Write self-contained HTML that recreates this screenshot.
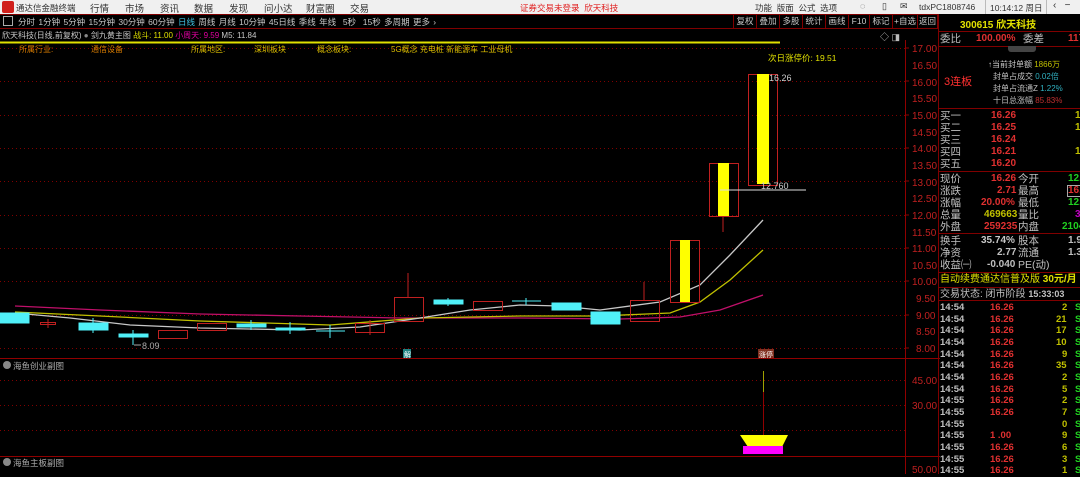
<!DOCTYPE html>
<html><head><meta charset="utf-8"><style>
*{margin:0;padding:0;box-sizing:border-box}
body{width:1080px;height:474px;background:#000;overflow:hidden;position:relative;font-family:"Liberation Sans","Noto Sans CJK SC",sans-serif;font-size:9px;color:#c0c0c0}
.a{position:absolute;white-space:nowrap}
#top{left:0;top:0;width:1080px;height:14px;background:#f0f0f0;color:#333;font-size:9px}
#per{left:0;top:14px;width:938px;height:15px;border-top:1px solid #800000;border-bottom:1px solid #800000;font-size:8.5px;color:#c8c8c8}
.btn{position:absolute;top:15px;height:14px;border-left:1px solid #800000;font-size:8.5px;color:#c8c8c8;text-align:center;line-height:13px}
.rp{left:938px;width:142px;border-left:1px solid #800000}
.row{position:absolute;left:940px;width:140px;height:12px;font-size:10.5px;line-height:12px}
.row b{font-size:10px}
.tk{position:absolute;left:940px;width:140px;height:11.7px;font-size:9.5px;font-weight:bold;line-height:11px}
</style></head><body>
<div class="a" id="top">
 <div class="a" style="left:2px;top:1px;width:12px;height:12px;background:#d0201c;border-radius:2px"></div>
 <span class="a" style="left:16px;top:2px;font-size:8.5px">通达信金融终端</span>
 <span class="a" style="left:90px;top:1px;font-size:9.5px">行情</span>
 <span class="a" style="left:125px;top:1px;font-size:9.5px">市场</span>
 <span class="a" style="left:160px;top:1px;font-size:9.5px">资讯</span>
 <span class="a" style="left:194px;top:1px;font-size:9.5px">数据</span>
 <span class="a" style="left:229px;top:1px;font-size:9.5px">发现</span>
 <span class="a" style="left:264px;top:1px;font-size:9.5px">问小达</span>
 <span class="a" style="left:306px;top:1px;font-size:9.5px">财富圈</span>
 <span class="a" style="left:350px;top:1px;font-size:9.5px">交易</span>
 <span class="a" style="left:520px;top:2px;color:#e02020;font-size:8.5px">证券交易未登录&nbsp; 欣天科技</span>
 <span class="a" style="left:755px;top:2px;font-size:8.5px">功能&nbsp; 版面&nbsp; 公式&nbsp; 选项</span>
 <span class="a" style="left:860px;top:1px">◌</span>
 <span class="a" style="left:882px;top:1px">▯</span>
 <span class="a" style="left:900px;top:1px">✉</span>
 <span class="a" style="left:919px;top:2px;font-size:8.5px">tdxPC1808746</span>
 <div class="a" style="left:985px;top:0;width:1px;height:14px;background:#bbb"></div>
 <span class="a" style="left:990px;top:2px;font-size:8.5px">10:14:12 周日</span>
 <div class="a" style="left:1046px;top:0;width:1px;height:14px;background:#bbb"></div>
 <span class="a" style="left:1053px;top:0px;font-size:10px">‹&nbsp;&nbsp; −</span>
</div>
<div class="a" id="per">
 <div class="a" style="left:3px;top:1px;width:10px;height:10px;border:1px solid #aaa"></div>
 <span class="a" style="left:18px;top:1px;word-spacing:1px">分时 1分钟 5分钟 15分钟 30分钟 60分钟 <span style="color:#40c0e0">日线</span> 周线 月线 10分钟 45日线 季线 年线 &nbsp;5秒 &nbsp;15秒 多周期 更多 ›</span>
</div>
<div class="btn" style="left:733px;width:23px">复权</div>
<div class="btn" style="left:756px;width:23px">叠加</div>
<div class="btn" style="left:779px;width:23px">多股</div>
<div class="btn" style="left:802px;width:23px">统计</div>
<div class="btn" style="left:825px;width:23px">画线</div>
<div class="btn" style="left:848px;width:21px">F10</div>
<div class="btn" style="left:869px;width:23px">标记</div>
<div class="btn" style="left:892px;width:25px">+自选</div>
<div class="btn" style="left:917px;width:21px;border-right:1px solid #800000">返回</div>

<span class="a" style="left:2px;top:30px;color:#c8c8c8;font-size:8px">欣天科技(日线,前复权) <span style="color:#888">●</span> 剑九黄主图 <span style="color:#e0e000">战斗: 11.00</span> <span style="color:#e000a0">小周天: 9.59</span> M5: 11.84</span>
<span class="a" style="left:19px;top:44px;color:#e08000;font-size:8px">所属行业:</span>
<span class="a" style="left:91px;top:44px;color:#e08000;font-size:8px">通信设备</span>
<span class="a" style="left:191px;top:44px;color:#e0c000;font-size:8px">所属地区:</span>
<span class="a" style="left:254px;top:44px;color:#e0c000;font-size:8px">深圳板块</span>
<span class="a" style="left:317px;top:44px;color:#e0c000;font-size:8px">概念板块:</span>
<span class="a" style="left:391px;top:44px;color:#e0c000;font-size:8px">5G概念 充电桩 新能源车 工业母机</span>
<span class="a" style="left:768px;top:52px;color:#e0e000;font-size:8.5px">次日涨停价: 19.51</span>
<span class="a" style="left:880px;top:30px;color:#bbb">◇ ◨</span>

<svg class="a" style="left:0;top:0" width="940" height="474">
 <line x1="0" y1="42.5" x2="780" y2="42.5" stroke="#e0e000" stroke-width="2"/>
 <g stroke="#800000" stroke-dasharray="1,3" stroke-width="1">
  <line x1="0" y1="48.5" x2="905" y2="48.5"/><line x1="0" y1="81.5" x2="905" y2="81.5"/><line x1="0" y1="115.5" x2="905" y2="115.5"/><line x1="0" y1="148.5" x2="905" y2="148.5"/><line x1="0" y1="181.5" x2="905" y2="181.5"/><line x1="0" y1="215.5" x2="905" y2="215.5"/><line x1="0" y1="248.5" x2="905" y2="248.5"/><line x1="0" y1="281.5" x2="905" y2="281.5"/><line x1="0" y1="315.5" x2="905" y2="315.5"/><line x1="0" y1="348.5" x2="905" y2="348.5"/>
  <line x1="0" y1="380.5" x2="905" y2="380.5"/><line x1="0" y1="405.5" x2="905" y2="405.5"/><line x1="0" y1="430.5" x2="905" y2="430.5"/>
 </g>
 <line x1="0" y1="358.5" x2="940" y2="358.5" stroke="#900000"/>
 <line x1="0" y1="456.5" x2="940" y2="456.5" stroke="#900000"/>
 <line x1="905.5" y1="40" x2="905.5" y2="474" stroke="#900000"/>
 <g fill="#c02020" font-size="10" font-family="Liberation Sans">
  <text x="912" y="52">17.00</text><text x="912" y="69">16.50</text><text x="912" y="86">16.00</text><text x="912" y="102">15.50</text><text x="912" y="119">15.00</text><text x="912" y="136">14.50</text><text x="912" y="152">14.00</text><text x="912" y="169">13.50</text><text x="912" y="186">13.00</text><text x="912" y="202">12.50</text><text x="912" y="219">12.00</text><text x="912" y="236">11.50</text><text x="912" y="252">11.00</text><text x="912" y="269">10.50</text><text x="912" y="285">10.00</text><text x="916" y="302">9.50</text><text x="916" y="319">9.00</text><text x="916" y="335">8.50</text><text x="916" y="352">8.00</text>
  <text x="912" y="384">45.00</text><text x="912" y="409">30.00</text><text x="912" y="473">50.00</text>
 </g>
 <g stroke="#900000"><line x1="905" y1="48" x2="909" y2="48"/><line x1="905" y1="81" x2="909" y2="81"/><line x1="905" y1="115" x2="909" y2="115"/><line x1="905" y1="148" x2="909" y2="148"/><line x1="905" y1="181" x2="909" y2="181"/><line x1="905" y1="215" x2="909" y2="215"/><line x1="905" y1="248" x2="909" y2="248"/><line x1="905" y1="281" x2="909" y2="281"/><line x1="905" y1="315" x2="909" y2="315"/><line x1="905" y1="348" x2="909" y2="348"/></g>
 <polyline fill="none" stroke="#c0106a" stroke-width="1.3" points="15,306 100,310 200,314 300,316 400,318 520,318 620,319 680,317 720,310 763,295"/>
 <polyline fill="none" stroke="#c0c000" stroke-width="1.3" points="15,312 100,316 200,321 330,325 420,318 520,316 600,316 670,313 700,302 730,280 763,250"/>
 <polyline fill="none" stroke="#c8c8c8" stroke-width="1.3" points="15,313 70,318 130,325 200,328 300,330 360,327 420,318 470,310 520,305 560,306 600,310 660,302 700,285 730,255 763,220"/>
 <g fill="#50f0f8" stroke="#50f0f8">
  <rect x="0" y="313" width="29" height="10"/><rect x="79" y="323" width="29" height="7"/><line x1="93" y1="318" x2="93" y2="333"/>
  <rect x="119" y="334" width="29" height="3"/><line x1="133" y1="330" x2="133" y2="345"/>
  <rect x="237" y="324" width="29" height="3"/><line x1="251" y1="320" x2="251" y2="330"/>
  <rect x="276" y="328" width="29" height="2"/><line x1="290" y1="322" x2="290" y2="334"/>
  <line x1="316" y1="331" x2="345" y2="331"/><line x1="330" y1="325" x2="330" y2="338"/>
  <rect x="434" y="300" width="29" height="4"/><line x1="448" y1="298" x2="448" y2="306"/>
  <line x1="512" y1="301" x2="541" y2="301"/><line x1="526" y1="298" x2="526" y2="305"/>
  <rect x="552" y="303" width="29" height="7"/>
  <rect x="591" y="312" width="29" height="12"/>
 </g>
 <g fill="none" stroke="#c02020">
  <rect x="40.5" y="322.5" width="15" height="2"/><line x1="48" y1="319" x2="48" y2="328"/>
  <rect x="158.5" y="330.5" width="29" height="8"/>
  <rect x="197.5" y="323.5" width="29" height="7"/>
  <rect x="355.5" y="323.5" width="29" height="9"/><line x1="370" y1="320" x2="370" y2="335"/>
  <rect x="394.5" y="297.5" width="29" height="24"/><line x1="408" y1="273" x2="408" y2="297"/>
  <rect x="473.5" y="301.5" width="29" height="9"/>
  <rect x="630.5" y="300.5" width="29" height="21"/><line x1="644" y1="282" x2="644" y2="300"/>
  <rect x="670.5" y="240.5" width="29" height="62"/>
  <rect x="709.5" y="163.5" width="29" height="53"/><line x1="723" y1="216" x2="723" y2="232"/>
  <rect x="748.5" y="74.5" width="29" height="111"/>
 </g>
 <g fill="#ffff00"><rect x="680" y="240" width="10" height="62"/><rect x="718" y="163" width="11" height="53"/><rect x="757" y="74" width="12" height="110"/></g>
 <line x1="720" y1="190" x2="806" y2="190" stroke="#ddd"/>
 <text x="761" y="189" fill="#ccc" font-size="9">12.760</text>
 <text x="769" y="81" fill="#ccc" font-size="9">16.26</text>
 <text x="142" y="349" fill="#aaa" font-size="9">8.09</text>
 <line x1="134" y1="345" x2="141" y2="345" stroke="#aaa"/>
 <rect x="403" y="349" width="8" height="9" fill="#208080"/><text x="404" y="357" fill="#fff" font-size="7">解</text>
 <rect x="758" y="349" width="16" height="9" fill="#803020"/><text x="759" y="357" fill="#fff" font-size="7">涨停</text>
 <line x1="763.5" y1="371" x2="763.5" y2="440" stroke="#900000"/>
 <line x1="763.5" y1="371" x2="763.5" y2="392" stroke="#a0a000"/>
 <polygon points="740,435 788,435 782,447 748,447" fill="#ffff00"/>
 <rect x="743" y="446" width="40" height="8" fill="#ff00ff"/>
 <circle cx="7" cy="365" r="4" fill="#888"/><circle cx="7" cy="462" r="4" fill="#888"/>
</svg>
<span class="a" style="left:13px;top:360px;color:#aaa;font-size:8.5px">海鱼创业副图</span>
<span class="a" style="left:13px;top:457px;color:#aaa;font-size:8.5px">海鱼主板副图</span>

<div class="a rp" style="top:14px;height:460px"></div>
<span class="a" style="left:960px;top:16px;color:#e0e000;font-size:10px;font-weight:bold">300615 欣天科技</span>
<div class="a" style="left:938px;top:31px;width:142px;border-top:1px solid #800000"></div>
<div class="row" style="top:33px">委比<b class="a" style="left:36px;color:#e03030">100.00%</b><span class="a" style="left:83px">委差</span><b class="a" style="left:128px;color:#e03030">117</b></div>
<div class="a" style="left:938px;top:46px;width:142px;border-top:1px solid #800000"></div>
<div class="a" style="left:1008px;top:46px;width:28px;height:6px;background:#444;border-radius:0 0 3px 3px"></div>
<span class="a" style="left:944px;top:73px;color:#ff3030;font-size:11px">3连板</span>
<span class="a" style="left:988px;top:59px;font-size:8px;color:#c8c8c8">↑当前封单额 <span style="color:#c0c000">1866万</span></span>
<span class="a" style="left:993px;top:71px;font-size:8px">封单占成交 <span style="color:#30b0c0">0.02倍</span></span>
<span class="a" style="left:993px;top:83px;font-size:8px">封单占流通Z <span style="color:#30b0c0">1.22%</span></span>
<span class="a" style="left:993px;top:95px;font-size:8px">十日总涨幅 <span style="color:#c03030">85.83%</span></span>
<div class="a" style="left:938px;top:108px;width:142px;border-top:1px solid #800000"></div>
<div class="row" style="top:110px">买一<b class="a" style="left:51px;color:#e03030">16.26</b><b class="a" style="left:135px;color:#c0c000">114</b></div>
<div class="row" style="top:122px">买二<b class="a" style="left:51px;color:#e03030">16.25</b><b class="a" style="left:135px;color:#c0c000">1</b></div>
<div class="row" style="top:134px">买三<b class="a" style="left:51px;color:#e03030">16.24</b></div>
<div class="row" style="top:146px">买四<b class="a" style="left:51px;color:#e03030">16.21</b><b class="a" style="left:135px;color:#c0c000">1</b></div>
<div class="row" style="top:158px">买五<b class="a" style="left:51px;color:#e03030">16.20</b></div>
<div class="a" style="left:938px;top:171px;width:142px;border-top:1px solid #800000"></div>
<div class="row" style="top:173px">现价<b class="a" style="left:51px;color:#e03030">16.26</b><span class="a" style="left:78px">今开</span><b class="a" style="left:128px;color:#20d020">12.</b></div>
<div class="row" style="top:185px">涨跌<b class="a" style="left:57px;color:#e03030">2.71</b><span class="a" style="left:78px">最高</span><b class="a" style="left:127px;color:#e03030;border:1px solid #aaa;line-height:10px">16.</b></div>
<div class="row" style="top:197px">涨幅<b class="a" style="left:41px;color:#e03030">20.00%</b><span class="a" style="left:78px">最低</span><b class="a" style="left:128px;color:#20d020">12.</b></div>
<div class="row" style="top:209px">总量<b class="a" style="left:44px;color:#c0c000">469663</b><span class="a" style="left:78px">量比</span><b class="a" style="left:135px;color:#c000c0">3.</b></div>
<div class="row" style="top:221px">外盘<b class="a" style="left:44px;color:#e03030">259235</b><span class="a" style="left:78px">内盘</span><b class="a" style="left:122px;color:#20d020">2104</b></div>
<div class="a" style="left:938px;top:233px;width:142px;border-top:1px solid #800000"></div>
<div class="row" style="top:235px">换手<b class="a" style="left:41px;color:#c8c8c8">35.74%</b><span class="a" style="left:78px">股本</span><b class="a" style="left:128px">1.92</b></div>
<div class="row" style="top:247px">净资<b class="a" style="left:57px">2.77</b><span class="a" style="left:78px">流通</span><b class="a" style="left:128px">1.31</b></div>
<div class="row" style="top:259px">收益㈠<b class="a" style="left:47px">-0.040</b><span class="a" style="left:78px">PE(动)</span></div>
<div class="a" style="left:938px;top:272px;width:142px;border-top:1px solid #800000"></div>
<div class="row" style="top:274px;color:#e0e000;font-size:10px">自动续费通达信普及版 <b>30元/月</b></div>
<div class="a" style="left:938px;top:287px;width:142px;border-top:1px solid #800000"></div>
<div class="row" style="top:288px;font-size:10px">交易状态: 闭市阶段 <b style="font-size:9px">15:33:03</b></div>
<div class="a" style="left:938px;top:300px;width:142px;border-top:1px solid #800000"></div>
<div class="tk" style="top:302px">14:54<span class="a" style="left:50px;color:#e03030">16.26</span><span class="a" style="left:122px;color:#c0c000">2</span><span class="a" style="left:135px;color:#20d020">S</span></div>
<div class="tk" style="top:314px">14:54<span class="a" style="left:50px;color:#e03030">16.26</span><span class="a" style="left:116px;color:#c0c000">21</span><span class="a" style="left:135px;color:#20d020">S</span></div>
<div class="tk" style="top:325px">14:54<span class="a" style="left:50px;color:#e03030">16.26</span><span class="a" style="left:116px;color:#c0c000">17</span><span class="a" style="left:135px;color:#20d020">S</span></div>
<div class="tk" style="top:337px">14:54<span class="a" style="left:50px;color:#e03030">16.26</span><span class="a" style="left:116px;color:#c0c000">10</span><span class="a" style="left:135px;color:#20d020">S</span></div>
<div class="tk" style="top:349px">14:54<span class="a" style="left:50px;color:#e03030">16.26</span><span class="a" style="left:122px;color:#c0c000">9</span><span class="a" style="left:135px;color:#20d020">S</span></div>
<div class="tk" style="top:360px">14:54<span class="a" style="left:50px;color:#e03030">16.26</span><span class="a" style="left:116px;color:#c0c000">35</span><span class="a" style="left:135px;color:#20d020">S</span></div>
<div class="tk" style="top:372px">14:54<span class="a" style="left:50px;color:#e03030">16.26</span><span class="a" style="left:122px;color:#c0c000">2</span><span class="a" style="left:135px;color:#20d020">S</span></div>
<div class="tk" style="top:384px">14:54<span class="a" style="left:50px;color:#e03030">16.26</span><span class="a" style="left:122px;color:#c0c000">5</span><span class="a" style="left:135px;color:#20d020">S</span></div>
<div class="tk" style="top:395px">14:55<span class="a" style="left:50px;color:#e03030">16.26</span><span class="a" style="left:122px;color:#c0c000">2</span><span class="a" style="left:135px;color:#20d020">S</span></div>
<div class="tk" style="top:407px">14:55<span class="a" style="left:50px;color:#e03030">16.26</span><span class="a" style="left:122px;color:#c0c000">7</span><span class="a" style="left:135px;color:#20d020">S</span></div>
<div class="tk" style="top:419px">14:55<span class="a" style="left:122px;color:#c0c000">0</span><span class="a" style="left:135px;color:#20d020">S</span></div>
<div class="tk" style="top:430px">14:55<span class="a" style="left:50px;color:#e03030">1 .00</span><span class="a" style="left:122px;color:#c0c000">9</span><span class="a" style="left:135px;color:#20d020">S</span></div>
<div class="tk" style="top:442px">14:55<span class="a" style="left:50px;color:#e03030">16.26</span><span class="a" style="left:122px;color:#c0c000">6</span><span class="a" style="left:135px;color:#20d020">S</span></div>
<div class="tk" style="top:454px">14:55<span class="a" style="left:50px;color:#e03030">16.26</span><span class="a" style="left:122px;color:#c0c000">3</span><span class="a" style="left:135px;color:#20d020">S</span></div>
<div class="tk" style="top:465px">14:55<span class="a" style="left:50px;color:#e03030">16.26</span><span class="a" style="left:122px;color:#c0c000">1</span><span class="a" style="left:135px;color:#20d020">S</span></div>
</body></html>
